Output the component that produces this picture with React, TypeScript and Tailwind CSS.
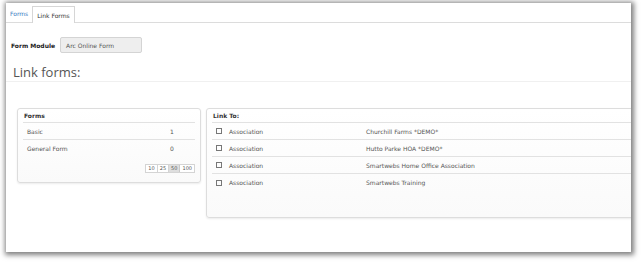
import React from "react";

const rows = [
  "Churchill Farms *DEMO*",
  "Hutto Parke HOA *DEMO*",
  "Smartwebs Home Office Association",
  "Smartwebs Training",
];

export default function App() {
  return (
    <div className="w-[644px] h-[263px] bg-white overflow-hidden pt-[3px] pl-[6px]" style={{ fontFamily: '"DejaVu Sans", Verdana, sans-serif' }}>
      <div className="w-[625px] h-[249px] bg-white shadow-[1px_1px_5px_2px_rgba(0,0,0,0.5)] overflow-hidden text-[6px] text-[#555]">
        {/* tabs */}
        <div className="h-[20px] border-b border-[#dcdcdc] flex items-end pl-[2px]">
          <div className="h-[17px] px-[2px] flex items-center text-[#3a7bbf] text-[6px]">Forms</div>
          <div className="h-[17px] px-[4px] ml-[2px] flex items-center border border-b-0 border-[#d6d6d6] bg-white text-[#333] text-[6px] -mb-px">Link Forms</div>
        </div>
        {/* form module */}
        <div className="flex items-center h-[16px] mt-[14px] pl-[5px]">
          <span className="font-bold text-[#222] text-[6px]">Form Module</span>
          <div className="ml-[5px] w-[82px] h-[16px] bg-[#eeeeee] border border-[#d4d4d4] rounded-[2px] flex items-center pl-[5px] text-[#555] text-[6px]">Arc Online Form</div>
        </div>
        {/* link forms heading */}
        <div className="mt-[12px] pl-[7px] h-[17px] border-b border-[#f0f0f0] flex items-end">
          <span className="text-[13px] leading-[13px] text-[#555] pb-[2px]" style={{ fontFamily: '"Open Sans", sans-serif' }}>Link forms:</span>
        </div>
        {/* panels */}
        <div className="flex items-start mt-[26px] pl-[11px] gap-[5px]">
          <div className="w-[184px] h-[75px] shrink-0 border border-[#dddddd] rounded-[3px] bg-gradient-to-b from-white to-[#fafafa] shadow-[0_1px_2px_rgba(0,0,0,0.08)] px-[5px]">
            <div className="h-[14px] flex items-center pl-[1px] font-bold text-[#333] border-b border-[#e2e2e2]">Forms</div>
            <div className="h-[17px] flex items-center border-b border-[#e2e2e2] pl-[4px]">
              <span className="flex-1">Basic</span>
              <span className="w-[25px]">1</span>
            </div>
            <div className="h-[17px] flex items-center pl-[4px]">
              <span className="flex-1">General Form</span>
              <span className="w-[25px]">0</span>
            </div>
            <div className="flex justify-end mt-[7px]">
              <div className="flex border border-[#d4d4d4] h-[9px] text-[5px]">
                <span className="px-[2px] flex items-center border-r border-[#d4d4d4] bg-white">10</span>
                <span className="px-[2px] flex items-center border-r border-[#d4d4d4] bg-white">25</span>
                <span className="px-[2px] flex items-center border-r border-[#c8c8c8] bg-[#dedede]">50</span>
                <span className="px-[2px] flex items-center bg-white">100</span>
              </div>
            </div>
          </div>
          <div className="w-[440px] h-[110px] shrink-0 border border-[#dddddd] rounded-[3px] bg-gradient-to-b from-white to-[#fafafa] shadow-[0_1px_2px_rgba(0,0,0,0.08)] px-[5px]">
            <div className="h-[14px] flex items-center pl-[1px] font-bold text-[#333] border-b border-[#e2e2e2]">Link To:</div>
            {rows.map((r, i) => (
              <div key={r} className={`h-[17px] flex items-center pl-[4px] ${i < rows.length - 1 ? "border-b border-[#e2e2e2]" : ""}`}>
                <span className="w-[6px] h-[6px] border border-[#777] mr-[7px]" />
                <span className="w-[137px]">Association</span>
                <span>{r}</span>
              </div>
            ))}
          </div>
        </div>
      </div>
    </div>
  );
}
